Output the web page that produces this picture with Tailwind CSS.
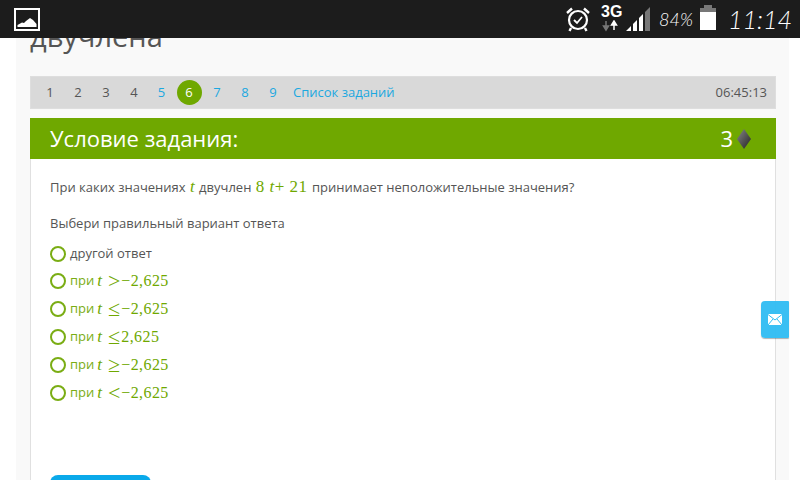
<!DOCTYPE html>
<html><head><meta charset="utf-8"><script src="https://cdn.jsdelivr.net/npm/@tailwindcss/browser@4"></script></head>
<body class="m-0">
<div class="relative w-[800px] h-[480px] overflow-hidden bg-white font-['Open_Sans',sans-serif] text-[#555]">
  <!-- status bar -->
  <div class="relative z-20 h-[38px] bg-[#1c1c1c] flex items-center pl-[14px] pr-[8px] text-white">
    <svg width="26" height="23" viewBox="0 0 26 23"><rect x="1" y="1" width="24" height="21" fill="#1c1c1c" stroke="#fff" stroke-width="2"/><path d="M3.500 19 V17 L8 14.500 L10 15 L12 13 L16 10 L19 12 L22.500 16 V19 Z" fill="#fff"/></svg>
    <div class="ml-auto flex items-center h-full">
      <svg width="26" height="26" viewBox="0 0 26 26" class="mr-[10px]"><circle cx="13" cy="14" r="9" fill="none" stroke="#fff" stroke-width="2.200"/><path d="M9 14 L12 17 L17 11" fill="none" stroke="#fff" stroke-width="1.800"/><path d="M2 7 L7 2.500 M24 7 L19 2.500 M6 22 L4.500 25 M20 22 L21.500 25" stroke="#fff" stroke-width="2.400"/></svg>
      <div class="w-[22px] h-[30px] relative mr-[3px]">
        <span class="absolute left-0 top-[-1px] text-[16px] leading-[18px] font-bold font-['Liberation_Sans',sans-serif]">3G</span>
        <svg width="20" height="12" viewBox="0 0 20 12" class="absolute left-[0px] top-[16px]"><path d="M5 1 V6 M2.500 6 H7.500 L5 10 Z" fill="#777" stroke="#777" stroke-width="1.500"/><path d="M13 10 V4 M10.500 5 H15.500 L13 1 Z" fill="#fff" stroke="#fff" stroke-width="1.500"/></svg>
      </div>
      <svg width="24" height="24" viewBox="0 0 24 24" class="mr-[9px] mt-[-1px]"><path d="M0 24 L5 19 V24 Z M7 24 V17 L11 13 V24 Z" fill="#fff"/><path d="M13 24 V11 L17 7 V24 Z" fill="#fff"/><path d="M19 24 V5 L24 0 V24 Z" fill="#777"/></svg>
      <span class="text-[18px] italic font-light font-['Lato',sans-serif] w-[38px] mr-[2px] whitespace-nowrap">84%</span>
      <svg width="18" height="26" viewBox="0 0 18 26" class="mr-[11px] mt-[-2px]"><path d="M5 0 H13 V3 H17 V7 H1 V3 H5 Z" fill="#777"/><rect x="1" y="7" width="16" height="18" fill="#fff"/></svg>
      <span class="text-[25px] leading-none italic font-light font-['Lato',sans-serif] w-[64px] whitespace-nowrap">11:14</span>
    </div>
  </div>

  <!-- page panel -->
  <div class="ml-[16px] w-[773px] h-[442px] bg-[#f9f9f9] pl-[14px]">
    <div class="h-[38px] flex items-end"><span class="mb-[21px] text-[29px] leading-[38px] text-[#555]">двучлена</span></div>
    <!-- nav -->
    <div class="h-[33px] w-[746px] bg-[#d9d9d9] flex items-center text-[13px] border border-[#dedede] pl-[5px] pr-[8px]">
      <span class="w-[28px] text-center">1</span>
      <span class="w-[28px] text-center">2</span>
      <span class="w-[28px] text-center">3</span>
      <span class="w-[28px] text-center">4</span>
      <span class="w-[27px] text-center text-[#1ba8e0]">5</span>
      <span class="w-[25px] h-[25px] mx-[1.500px] rounded-full bg-[#6fa800] text-white flex items-center justify-center">6</span>
      <span class="w-[28px] text-center text-[#1ba8e0]">7</span>
      <span class="w-[28px] text-center text-[#1ba8e0]">8</span>
      <span class="w-[28px] text-center text-[#1ba8e0]">9</span>
      <span class="ml-[6px] text-[#1ba8e0]">Список заданий</span>
      <span class="ml-auto">06:45:13</span>
    </div>
    <!-- card -->
    <div class="mt-[9px] w-[746px] h-[400px] bg-white border-x border-[#e0e0e0]">
      <div class="-mx-px h-[41px] bg-[#6fa800] text-white flex items-center pl-[20px] pr-[25px] text-[22px]">
        <span>Условие задания:</span>
        <span class="ml-auto flex items-center"><span>3</span>
          <svg width="14" height="20" viewBox="0 0 14 20" class="ml-[4px] mt-[1px]"><defs><linearGradient id="g" x1="0" y1="0" x2="1" y2="1"><stop offset="0" stop-color="#888"/><stop offset="1" stop-color="#222"/></linearGradient></defs><path d="M7 0 L14 10 L7 20 L0 10 Z" fill="url(#g)"/></svg>
        </span>
      </div>
      <div class="pl-[19px] pt-[17px] text-[13px] text-[#555]">
        <p class="h-[22px] leading-[22px] whitespace-nowrap">При каких значениях <i class="font-['Liberation_Serif',serif] text-[17px] text-[#6fa800] mx-[1px]">t</i> двучлен <span class="font-['Liberation_Serif',serif] text-[17px] text-[#6fa800] tracking-[0.500px] ml-[1px] mr-[1px]">8 <i>t</i>+ 21</span> принимает неположительные значения?</p>
        <p class="mt-[14px] h-[22px] leading-[22px]">Выбери правильный вариант ответа</p>
        <div class="mt-[6px] flex flex-col">
          <div class="h-[27px] flex items-center"><span class="w-[16px] h-[16px] rounded-full border-2 border-[#7aad14] bg-white mr-[4px]"></span>другой ответ</div>
          <div class="h-[28px] flex items-center text-[#7aad14]"><span class="w-[16px] h-[16px] rounded-full border-2 border-[#7aad14] bg-white mr-[4px]"></span>при<span class="font-['Liberation_Serif',serif] text-[#6fa800] text-[16px] ml-[3px] flex items-center tracking-[0.400px]"><i class="w-[10px] text-[17px]">t</i><span class="w-[14px] text-[22px] text-center font-light leading-none">&gt;</span>−2,625</span></div>
          <div class="h-[28px] flex items-center text-[#7aad14]"><span class="w-[16px] h-[16px] rounded-full border-2 border-[#7aad14] bg-white mr-[4px]"></span>при<span class="font-['Liberation_Serif',serif] text-[#6fa800] text-[16px] ml-[3px] flex items-center tracking-[0.400px]"><i class="w-[10px] text-[17px]">t</i><span class="w-[14px] text-[22px] text-center font-light leading-none">≤</span>−2,625</span></div>
          <div class="h-[28px] flex items-center text-[#7aad14]"><span class="w-[16px] h-[16px] rounded-full border-2 border-[#7aad14] bg-white mr-[4px]"></span>при<span class="font-['Liberation_Serif',serif] text-[#6fa800] text-[16px] ml-[3px] flex items-center tracking-[0.400px]"><i class="w-[10px] text-[17px]">t</i><span class="w-[14px] text-[22px] text-center font-light leading-none">≤</span>2,625</span></div>
          <div class="h-[28px] flex items-center text-[#7aad14]"><span class="w-[16px] h-[16px] rounded-full border-2 border-[#7aad14] bg-white mr-[4px]"></span>при<span class="font-['Liberation_Serif',serif] text-[#6fa800] text-[16px] ml-[3px] flex items-center tracking-[0.400px]"><i class="w-[10px] text-[17px]">t</i><span class="w-[14px] text-[22px] text-center font-light leading-none">≥</span>−2,625</span></div>
          <div class="h-[28px] flex items-center text-[#7aad14]"><span class="w-[16px] h-[16px] rounded-full border-2 border-[#7aad14] bg-white mr-[4px]"></span>при<span class="font-['Liberation_Serif',serif] text-[#6fa800] text-[16px] ml-[3px] flex items-center tracking-[0.400px]"><i class="w-[10px] text-[17px]">t</i><span class="w-[14px] text-[22px] text-center font-light leading-none">&lt;</span>−2,625</span></div>
        </div>
        <div class="mt-[68px] w-[101px] h-[40px] rounded-[8px] bg-[#0aa9ea]"></div>
      </div>
    </div>
  </div>

  <!-- feedback tab -->
  <div class="absolute left-[761px] top-[301px] w-[28px] h-[37px] bg-[#2ebcf2]/95 rounded-l-[4px] rounded-r-[1px] shadow-[0_1px_1px_rgba(0,0,0,0.3)] flex items-center justify-center">
    <svg width="14" height="11" viewBox="0 0 14 11"><rect width="14" height="11" fill="#fff"/><path d="M0 0.500 L7 6 L14 0.500 M0 11 L5 5 M14 11 L9 5" fill="none" stroke="#2ebcf2" stroke-width="1"/></svg>
  </div>
</div>
</body></html>
